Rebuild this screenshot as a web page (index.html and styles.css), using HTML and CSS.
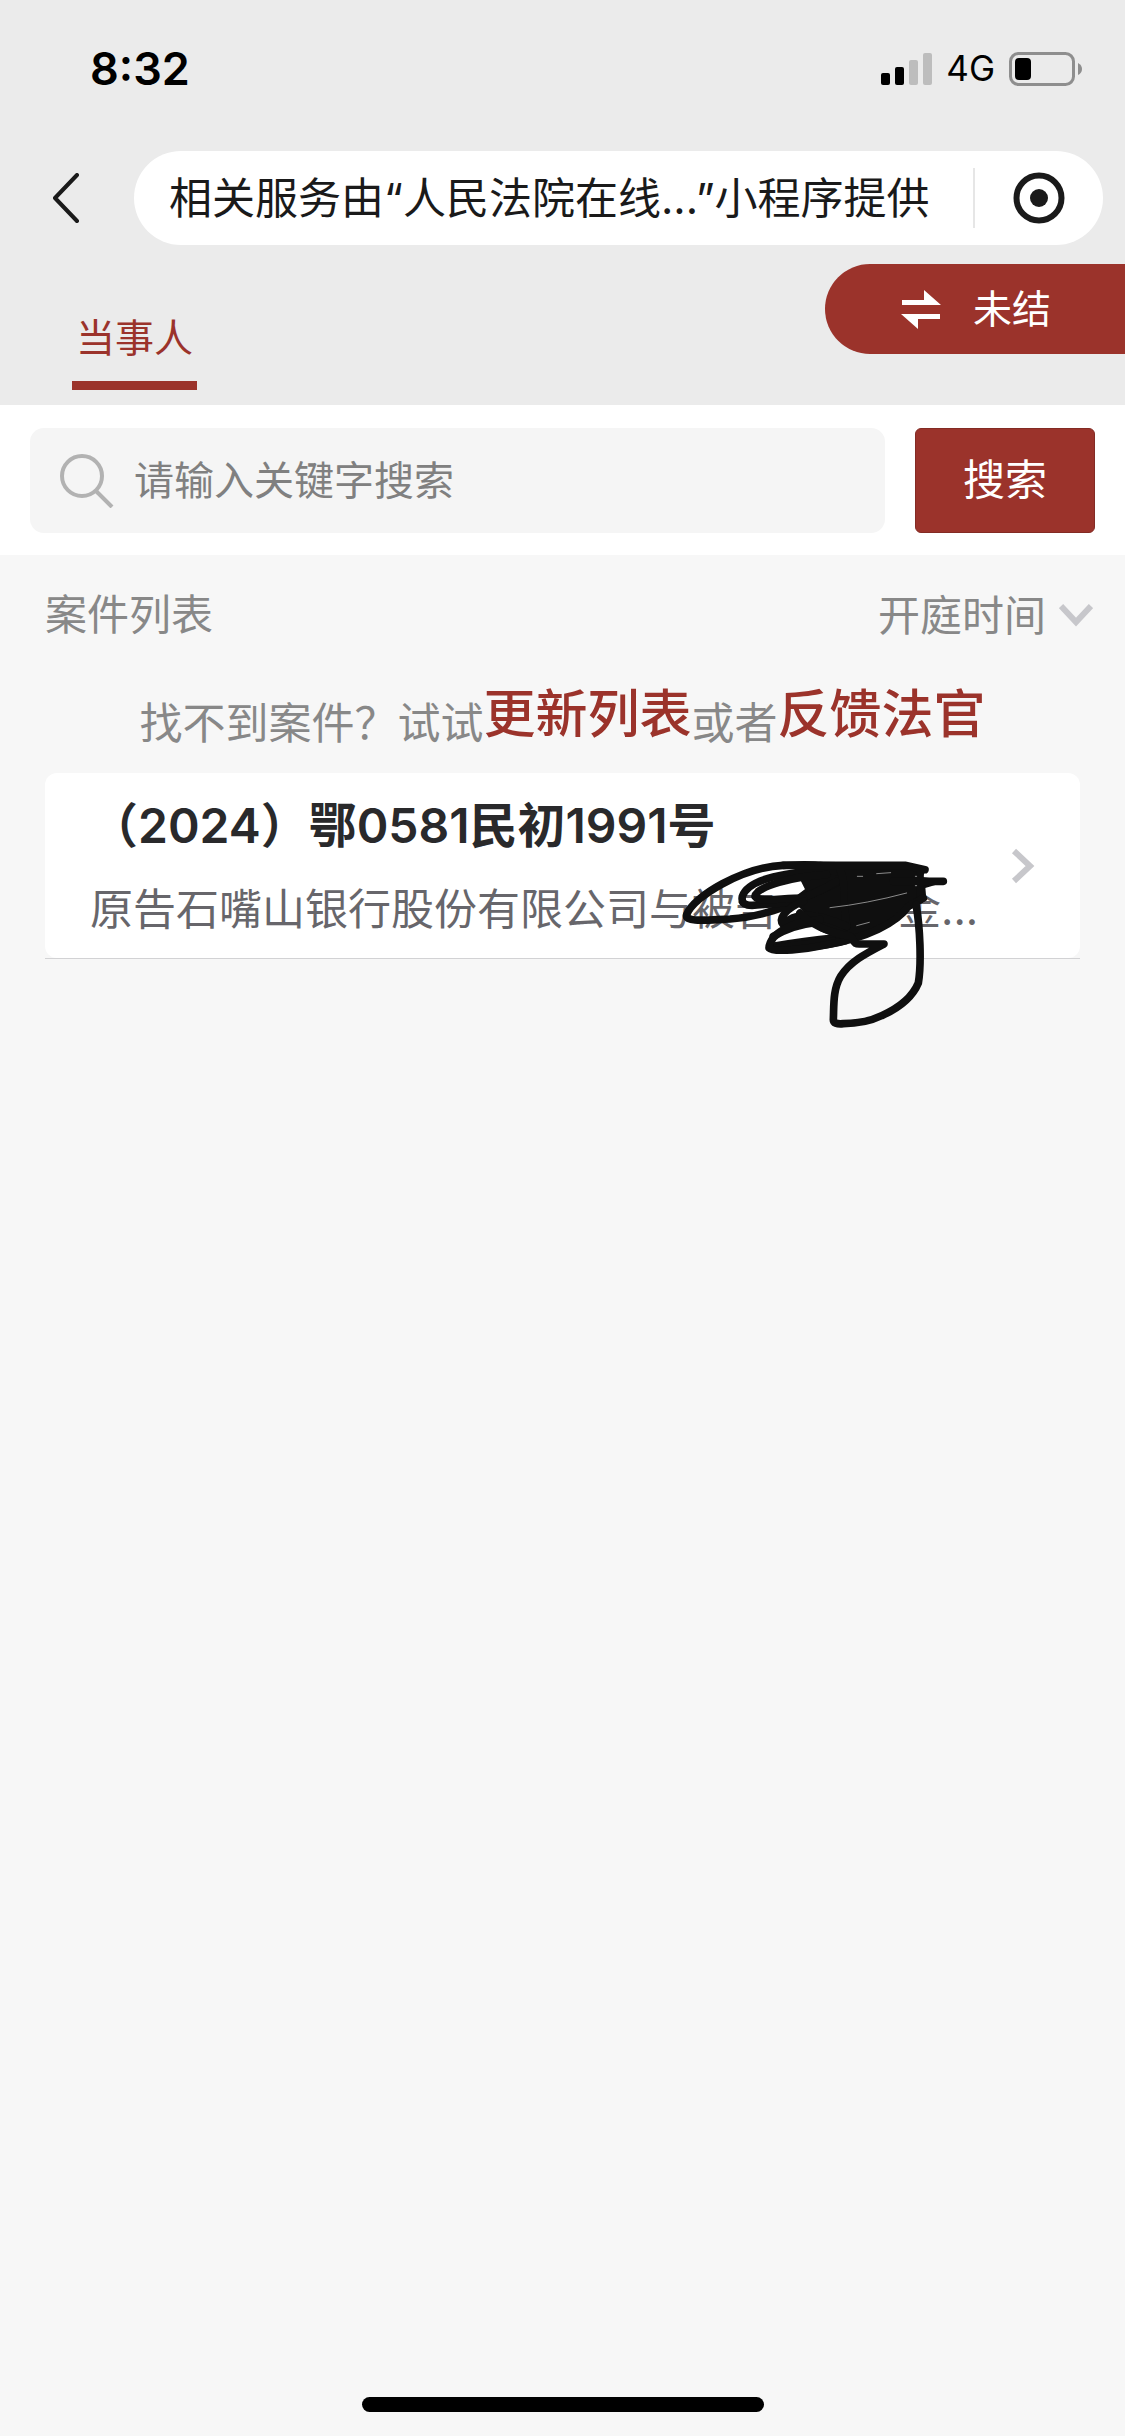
FILE: index.html
```html
<!DOCTYPE html>
<html lang="zh-CN">
<head>
  <meta charset="UTF-8">
  <meta name="viewport" content="width=device-width, initial-scale=1">
  <title>案件列表</title>
  <link rel="stylesheet" href="styles.css">
</head>
<body>
  <header class="header">
    <div class="status-bar">
      <span class="time">8:32</span>
      <div class="status-icons">
        <svg class="signal" viewBox="0 0 51 32" aria-hidden="true">
          <rect x="0" y="20" width="9" height="12" rx="2"/>
          <rect x="14" y="14" width="9" height="18" rx="2"/>
          <rect x="28" y="7" width="9" height="25" rx="2" fill="#bdbdbd"/>
          <rect x="42" y="0" width="9" height="32" rx="2" fill="#bdbdbd"/>
        </svg>
        <span class="network">4G</span>
        <svg class="battery" viewBox="0 0 74 34" aria-hidden="true">
          <rect x="1.5" y="1.5" width="63" height="31" rx="8" fill="none" stroke="#8e8e8e" stroke-width="3"/>
          <rect x="6" y="6" width="16" height="22" rx="4"/>
          <path d="M69 11q4 2 4 6t-4 6z" fill="#8e8e8e"/>
        </svg>
      </div>
    </div>

    <nav class="nav-bar">
      <button class="back" aria-label="返回">
        <svg viewBox="0 0 27 50" aria-hidden="true"><path d="M25 2L3 25l22 23"/></svg>
      </button>
      <div class="capsule">
        <span class="capsule-text">相关服务由“人民法院在线...”小程序提供</span>
        <button class="capsule-close" aria-label="关闭">
          <svg viewBox="0 0 52 52" aria-hidden="true">
            <circle cx="26" cy="26" r="22.5" fill="none" stroke="#1a1a1a" stroke-width="6"/>
            <circle cx="26" cy="26" r="9" fill="#1a1a1a"/>
          </svg>
        </button>
      </div>
    </nav>

    <div class="tabs">
      <a class="tab active" href="#party">当事人</a>
      <button class="switch">
        <svg viewBox="0 0 40 40" aria-hidden="true"><path d="M1 11h22V1l17 15H1zM39 30H17v10L0 25h39z"/></svg>
        <span>未结</span>
      </button>
    </div>
  </header>

  <form class="search">
    <label class="search-box">
      <svg viewBox="0 0 54 54" aria-hidden="true"><circle cx="22" cy="22" r="20"/><path d="M36 37l16 16"/></svg>
      <input type="text" placeholder="请输入关键字搜索" aria-label="关键字">
    </label>
    <button type="button" class="search-btn">搜索</button>
  </form>

  <main class="content" id="party">
    <div class="list-head">
      <h1>案件列表</h1>
      <label class="sort">
        <select aria-label="排序">
          <option>开庭时间</option>
        </select>
        <svg viewBox="0 0 34 24" aria-hidden="true"><path d="M2 3l15 16L32 3"/></svg>
      </label>
    </div>

    <div class="hint">
      <span>找不到案件？试试</span>
      <button>更新列表</button>
      <span>或者</span>
      <button>反馈法官</button>
    </div>

    <div class="case-list">
      <a class="case" href="#case">
        <div class="case-text">
          <h2>（2024）鄂0581民初1991号</h2>
          <p>原告石嘴山银行股份有限公司与被告<span class="hidden-name"></span>金...</p>
        </div>
        <svg class="arrow" viewBox="0 0 24 36" aria-hidden="true"><path d="M3 3l16 15L3 33"/></svg>
      </a>
      <!-- pen marks over the name -->
      <svg class="scribble" viewBox="60 85 810 516" aria-hidden="true">
        <path class="fill" d="M480 100L735 104L795 120L780 145L850 155L792 172L795 210L742 240Q700 290 570 335L480 300L430 240L400 210L440 180L425 150L480 130z"/>
        <path class="fill" d="M330 362L325 345Q440 325 520 318L575 320L560 340Q440 370 330 362z"/>
        <path d="M540 125C500 100 420 105 370 107C250 112 100 200 80 255C72 280 150 270 210 268C300 262 390 230 440 200L530 160"/>
        <path d="M540 125C470 120 270 130 247 200C240 240 290 225 340 222C400 220 470 190 530 155"/>
        <path d="M500 135C400 140 290 170 285 200C300 220 360 205 430 205"/>
        <path d="M370 107H735L795 120M540 120Q555 150 552 220L560 290M700 155H850M780 125V210"/>
        <path d="M430 215C370 240 355 270 370 285C400 250 460 245 560 290"/>
        <path d="M340 320Q400 285 470 278"/>
        <path d="M480 270C400 275 330 310 327 355C340 370 440 358 500 345C620 325 710 280 745 230L790 205"/>
        <path d="M420 250Q470 300 560 318C590 320 570 345 600 343L672 343C620 370 570 395 542 440C518 480 522 530 520 570Q520 585 550 582C590 582 630 575 665 558Q750 520 775 460C785 400 780 290 768 225"/>
        <g class="gaps">
          <path d="M510 234Q620 222 740 190"/>
          <path d="M592 140h16M650 132l42-3"/>
          <path d="M590 288l38-10M766 140h4M766 168h4"/>
        </g>
      </svg>
    </div>
  </main>

  <div class="home-bar"></div>
</body>
</html>
```
FILE: styles.css
```css
* {
  box-sizing: border-box;
}

body {
  font-family: Inter, "Noto Sans CJK SC", sans-serif;
  line-height: 1.4;
  margin: 0;
  min-height: 100vh;
  display: flex;
  flex-direction: column;
  background: #f7f7f7;
  color: #1a1a1a;
}

button, input, select {
  font-family: inherit;
  border: none;
  background: none;
  padding: 0;
  margin: 0;
}

button {
  cursor: pointer;
  line-height: inherit;
}

a {
  text-decoration: none;
  color: inherit;
}

svg {
  display: block;
  flex-shrink: 0;
}

/* header */
.header {
  background: #ebebeb;
}

.status-bar {
  height: 137px;
  padding: 0 42px 0 90px;
  display: flex;
  align-items: center;
  justify-content: space-between;
  color: #000;
}

.time {
  font-size: 45px;
  font-weight: 600;
}

.status-icons {
  display: flex;
  align-items: center;
  gap: 14px;
}

.signal {
  width: 51px;
  height: 32px;
}

.network {
  font-size: 35px;
}

.battery {
  width: 74px;
  height: 34px;
}

.nav-bar {
  height: 122px;
  padding: 0 22px 0 51px;
  display: flex;
  align-items: center;
  gap: 54px;
}

.back svg {
  width: 29px;
  height: 50px;
  fill: none;
  stroke: #1a1a1a;
  stroke-width: 4;
  stroke-linecap: round;
  stroke-linejoin: round;
}

.capsule {
  flex: 1;
  height: 94px;
  padding-left: 35px;
  display: flex;
  align-items: center;
  justify-content: space-between;
  background: #fff;
  border-radius: 47px;
}

.capsule-text {
  font-size: 43px;
  white-space: nowrap;
}

.capsule-close {
  width: 130px;
  height: 60px;
  display: flex;
  align-items: center;
  justify-content: center;
  border-left: 2px solid #e6e6e6;
}

.capsule-close svg {
  width: 52px;
  height: 52px;
}

.tabs {
  height: 146px;
  padding: 5px 0 15px 72px;
  display: flex;
  align-items: flex-end;
  justify-content: space-between;
}

.tab {
  padding: 0 4px 15px;
  font-size: 39px;
  line-height: 56px;
  color: #9b332b;
}

.tab.active {
  border-bottom: 9px solid #9b332b;
}

.switch {
  align-self: flex-start;
  width: 300px;
  height: 90px;
  padding-left: 76px;
  display: flex;
  align-items: center;
  gap: 32px;
  background: #9b332b;
  color: #fff;
  font-size: 39px;
  border-radius: 45px 0 0 45px;
}

.switch svg {
  width: 40px;
  height: 40px;
  fill: #fff;
}

/* search */
.search {
  padding: 23px 30px 22px;
  display: flex;
  gap: 30px;
  background: #fff;
}

.search-box {
  flex: 1;
  height: 105px;
  padding: 0 30px;
  display: flex;
  align-items: center;
  gap: 20px;
  background: #f5f5f5;
  border-radius: 14px;
}

.search-box svg {
  width: 54px;
  height: 54px;
  fill: none;
  stroke: #b2b2b2;
  stroke-width: 4;
}

.search-box input {
  flex: 1;
  min-width: 0;
  font-size: 40px;
  outline: none;
}

.search-box input::placeholder {
  color: #808080;
}

.search-btn {
  width: 180px;
  height: 105px;
  font-size: 42px;
  color: #fff;
  background: #9b332b;
  border: 1px solid #832b24;
  border-radius: 6px;
}

/* list */
.content {
  padding: 0 45px;
}

.list-head {
  height: 120px;
  margin-right: -13px;
  display: flex;
  align-items: center;
  justify-content: space-between;
}

.list-head h1 {
  margin: 0;
  font-size: 42px;
  font-weight: 400;
  color: #888;
}

.sort {
  display: flex;
  align-items: center;
  gap: 12px;
}

.sort select {
  appearance: none;
  font-size: 42px;
  color: #888;
}

.sort svg {
  width: 34px;
  height: 24px;
}

.sort path,
.arrow path {
  fill: none;
  stroke: #c7c7cb;
  stroke-width: 6;
}

.hint {
  height: 72px;
  display: flex;
  align-items: flex-end;
  justify-content: center;
  font-size: 43px;
  line-height: 48px;
  color: #888;
}

.hint button {
  font-size: 52px;
  font-weight: 500;
  line-height: 64px;
  color: #9b332b;
}

.case-list {
  position: relative;
  margin-top: 26px;
  border-bottom: 1px solid #d2d2d4;
}

.case {
  padding: 20px 45px 19px;
  display: flex;
  align-items: center;
  justify-content: space-between;
  background: #fff;
  border-radius: 12px;
}

.case h2 {
  margin: 0 0 20px;
  font-size: 48px;
  font-weight: 600;
  line-height: 66px;
  color: #29292b;
}

.case p {
  margin: 0;
  font-size: 43px;
  line-height: 60px;
  color: #67666b;
}

.hidden-name {
  display: inline-block;
  width: 120px;
}

.arrow {
  width: 24px;
  height: 36px;
}

.scribble {
  position: absolute;
  left: 635px;
  top: 85px;
  width: 270px;
  height: 172px;
  pointer-events: none;
}

.scribble path {
  fill: none;
  stroke: #0f0f0f;
  stroke-width: 23;
  stroke-linecap: round;
  stroke-linejoin: round;
}

.scribble .fill {
  fill: #0f0f0f;
  stroke-width: 8;
}

.scribble .gaps path {
  stroke: #c8c8c8;
  stroke-width: 2;
}

.home-bar {
  width: 402px;
  height: 15px;
  margin: auto auto 24px;
  background: #000;
  border-radius: 8px;
}
```
